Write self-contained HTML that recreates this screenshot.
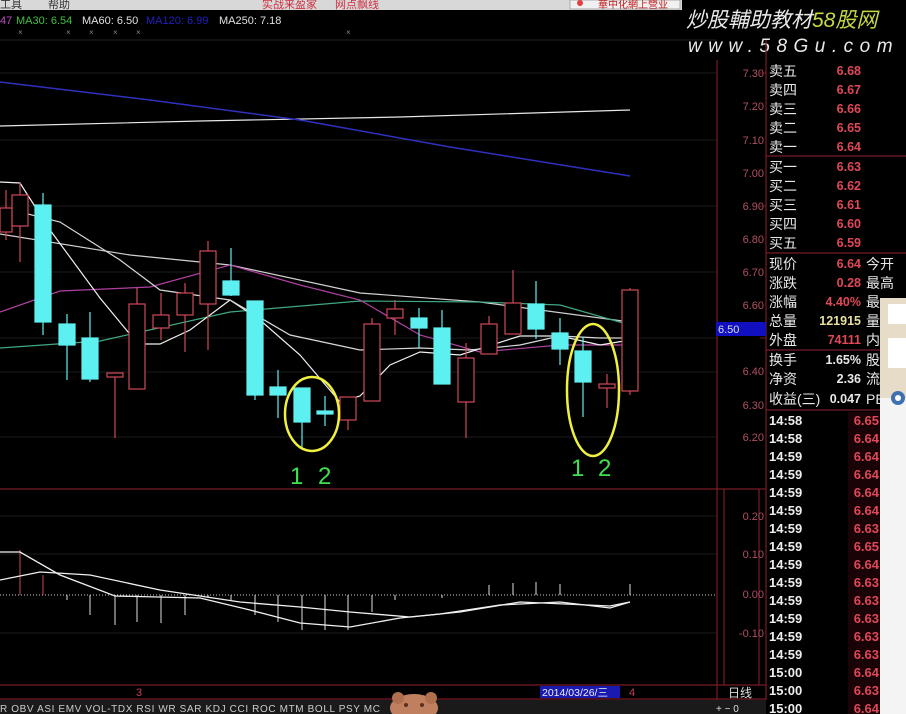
<!DOCTYPE html>
<html><head><meta charset="utf-8"><style>
html,body{margin:0;padding:0;background:#000;width:906px;height:714px;overflow:hidden}
svg{display:block}
text{font-family:"Liberation Sans","Noto Sans CJK SC",sans-serif}
.cn{font-family:"Liberation Sans","Noto Sans CJK SC",sans-serif}
</style></head><body>
<svg width="906" height="714" viewBox="0 0 906 714" xmlns="http://www.w3.org/2000/svg">
<rect width="906" height="714" fill="#000"/>
<rect x="0" y="0" width="682" height="10" fill="#d8d8d8"/>
<text x="0" y="8" font-size="11" fill="#333">工具</text>
<text x="48" y="8" font-size="11" fill="#333">帮助</text>
<text x="262" y="8" font-size="11" fill="#d03040">实战来盈家</text>
<text x="335" y="8" font-size="11" fill="#d03040">网点飘线</text>
<rect x="570" y="0" width="110" height="9" fill="#f0f0f0" stroke="#aaa"/>
<circle cx="580" cy="3" r="3" fill="#e04040"/>
<text x="598" y="8" font-size="10" fill="#c02020">華中化網上營业</text>
<text x="686" y="27" font-size="21" font-style="italic" fill="#e8e8e8">炒股輔助教材<tspan fill="#c8d840">58股网</tspan></text>
<text x="688" y="52" font-size="19" font-style="italic" fill="#e8e8e8" letter-spacing="6.5">www.58Gu.com</text>
<text x="0" y="24" font-size="11" fill="#c050c0">47</text>
<text x="16" y="24" font-size="11" fill="#40c040">MA30: 6.54</text>
<text x="82" y="24" font-size="11" fill="#e0e0e0">MA60: 6.50</text>
<text x="146" y="24" font-size="11" fill="#2020c0">MA120: 6.99</text>
<text x="219" y="24" font-size="11" fill="#e0e0e0">MA250: 7.18</text>
<g fill="#888" font-size="8"><text x="18" y="35">×</text><text x="66" y="35">×</text><text x="89" y="35">×</text><text x="113" y="35">×</text><text x="136" y="35">×</text><text x="346" y="35">×</text></g>
<g stroke="#1c1c1c" stroke-width="1">
<line x1="0" y1="73" x2="716" y2="73"/><line x1="0" y1="140" x2="716" y2="140"/><line x1="0" y1="206" x2="716" y2="206"/><line x1="0" y1="272" x2="716" y2="272"/><line x1="0" y1="338" x2="716" y2="338"/><line x1="0" y1="372" x2="716" y2="372"/><line x1="0" y1="437" x2="716" y2="437"/>
<line x1="0" y1="516" x2="716" y2="516"/><line x1="0" y1="554" x2="716" y2="554"/><line x1="0" y1="633" x2="716" y2="633"/>
</g>
<line x1="0" y1="40" x2="716" y2="40" stroke="#222"/>
<g stroke="#7a1a28" stroke-width="1.2">
<line x1="717" y1="60" x2="717" y2="700"/><line x1="766" y1="40" x2="766" y2="700"/>
<line x1="0" y1="489" x2="766" y2="489"/><line x1="0" y1="685" x2="766" y2="685"/>
<line x1="0" y1="699" x2="766" y2="699"/>
<line x1="724" y1="489" x2="724" y2="685"/><line x1="759" y1="489" x2="759" y2="685"/>
<line x1="766" y1="156" x2="906" y2="156"/><line x1="766" y1="253" x2="906" y2="253"/><line x1="766" y1="350" x2="906" y2="350"/><line x1="766" y1="410" x2="906" y2="410"/>
</g>
<g font-size="11" fill="#b05060" text-anchor="end">
<text x="764" y="77">7.30</text><text x="764" y="110">7.20</text><text x="764" y="144">7.10</text><text x="764" y="177">7.00</text><text x="764" y="210">6.90</text><text x="764" y="243">6.80</text><text x="764" y="276">6.70</text><text x="764" y="309">6.60</text><text x="764" y="375">6.40</text><text x="764" y="409">6.30</text><text x="764" y="441">6.20</text>
<text x="764" y="520">0.20</text><text x="764" y="558">0.10</text><text x="764" y="598">0.00</text><text x="764" y="637">-0.10</text>
</g>
<g stroke="#7a1a28"><line x1="760" y1="73" x2="766" y2="73"/><line x1="760" y1="206" x2="766" y2="206"/><line x1="760" y1="338" x2="766" y2="338"/></g>
<rect x="716" y="322" width="50" height="14" fill="#1010c0"/>
<text x="718" y="333" font-size="11" fill="#ddd">6.50</text>
<g fill="none" stroke-width="1.2">
<polyline stroke="#e8e8e8" points="0,126 200,121 400,117 630,110"/>
<polyline stroke="#3030c0" stroke-width="1.5" points="0,82 150,100 300,120 450,147 630,176"/>
<polyline stroke="#d0d0d0" points="0,234 130,255 230,265 360,293 480,302 630,322"/>
<polyline stroke="#40a880" points="0,348 100,341 230,312 360,301 480,302 560,305 630,325"/>
<polyline stroke="#b040a0" points="0,312 60,291 150,287 230,265 300,285 360,300 420,335 480,352 560,345 630,345"/>
<polyline stroke="#f0f0f0" points="0,182 20,183 50,230 100,298 138,344 160,344 190,330 230,300 260,320 300,355 340,402 360,396 390,365 420,352 460,355 520,336 560,336 600,345 630,340"/>
<polyline stroke="#d8d8d8" points="0,220 20,212 60,222 120,260 160,290 230,300 290,335 360,350 420,348 470,350 520,345 560,336 600,338 630,338"/>
</g>
<g stroke="#d04858" stroke-width="1.2" fill="#000">
<line x1="6" y1="190" x2="6" y2="240"/><rect x="0" y="208" width="12" height="24"/>
<line x1="20" y1="183" x2="20" y2="262"/><rect x="12" y="195" width="16" height="31"/>
<line x1="115" y1="375" x2="115" y2="438"/><rect x="107" y="373" width="16" height="4"/>
<line x1="137" y1="288" x2="137" y2="304"/><rect x="129" y="304" width="16" height="85"/>
<line x1="161" y1="293" x2="161" y2="340"/><rect x="153" y="315" width="16" height="13"/>
<line x1="185" y1="283" x2="185" y2="352"/><rect x="177" y="293" width="16" height="22"/>
<line x1="208" y1="241" x2="208" y2="350"/><rect x="200" y="251" width="16" height="53"/>
<line x1="348" y1="397" x2="348" y2="430"/><rect x="340" y="397" width="16" height="23"/>
<line x1="372" y1="318" x2="372" y2="324"/><rect x="364" y="324" width="16" height="77"/>
<line x1="395" y1="300" x2="395" y2="335"/><rect x="387" y="309" width="16" height="9"/>
<line x1="466" y1="343" x2="466" y2="438"/><rect x="458" y="358" width="16" height="44"/>
<line x1="489" y1="316" x2="489" y2="324"/><rect x="481" y="324" width="16" height="30"/>
<line x1="513" y1="270" x2="513" y2="303"/><rect x="505" y="303" width="16" height="31"/>
<line x1="607" y1="374" x2="607" y2="408"/><rect x="599" y="384" width="16" height="4"/>
<line x1="630" y1="288" x2="630" y2="395"/><rect x="622" y="290" width="16" height="101"/>
</g>
<g stroke="#60f0f0" stroke-width="1.2" fill="#5cf0f0">
<line x1="43" y1="193" x2="43" y2="335"/><rect x="35" y="205" width="16" height="117"/>
<line x1="67" y1="314" x2="67" y2="380"/><rect x="59" y="324" width="16" height="21"/>
<line x1="90" y1="312" x2="90" y2="382"/><rect x="82" y="338" width="16" height="41"/>
<line x1="231" y1="248" x2="231" y2="296"/><rect x="223" y="281" width="16" height="14"/>
<line x1="255" y1="301" x2="255" y2="400"/><rect x="247" y="301" width="16" height="94"/>
<line x1="278" y1="370" x2="278" y2="418"/><rect x="270" y="387" width="16" height="8"/>
<line x1="302" y1="388" x2="302" y2="448"/><rect x="294" y="388" width="16" height="34"/>
<line x1="325" y1="396" x2="325" y2="426"/><rect x="317" y="411" width="16" height="3"/>
<line x1="419" y1="308" x2="419" y2="348"/><rect x="411" y="318" width="16" height="10"/>
<line x1="442" y1="310" x2="442" y2="384"/><rect x="434" y="328" width="16" height="56"/>
<line x1="536" y1="281" x2="536" y2="339"/><rect x="528" y="304" width="16" height="25"/>
<line x1="560" y1="318" x2="560" y2="365"/><rect x="552" y="333" width="16" height="16"/>
<line x1="583" y1="337" x2="583" y2="417"/><rect x="575" y="351" width="16" height="31"/>
</g>
<g fill="none" stroke="#f0f040" stroke-width="2.5">
<ellipse cx="312" cy="414" rx="27" ry="37"/><ellipse cx="593" cy="390" rx="26" ry="66"/>
</g>
<g font-size="24" fill="#40e050">
<text x="290" y="484">1</text><text x="318" y="484">2</text><text x="571" y="476">1</text><text x="598" y="476">2</text>
</g>
<line x1="0" y1="595" x2="716" y2="595" stroke="#ccc" stroke-dasharray="1,2"/>
<g stroke="#e0e0e0" stroke-width="1">
<line x1="20" y1="550" x2="20" y2="595" stroke="#d04858"/><line x1="43" y1="575" x2="43" y2="595" stroke="#d04858"/>
<line x1="67" y1="595" x2="67" y2="600"/><line x1="90" y1="595" x2="90" y2="615"/><line x1="115" y1="595" x2="115" y2="625"/><line x1="137" y1="595" x2="137" y2="622"/><line x1="161" y1="595" x2="161" y2="623"/><line x1="185" y1="595" x2="185" y2="615"/><line x1="208" y1="595" x2="208" y2="598"/><line x1="231" y1="595" x2="231" y2="600"/><line x1="255" y1="595" x2="255" y2="615"/><line x1="278" y1="595" x2="278" y2="622"/><line x1="302" y1="595" x2="302" y2="630"/><line x1="325" y1="595" x2="325" y2="630"/><line x1="348" y1="595" x2="348" y2="630"/><line x1="372" y1="595" x2="372" y2="612"/><line x1="395" y1="595" x2="395" y2="600"/><line x1="442" y1="595" x2="442" y2="598"/>
<line x1="489" y1="585" x2="489" y2="595"/><line x1="513" y1="583" x2="513" y2="595"/><line x1="536" y1="582" x2="536" y2="595"/><line x1="560" y1="584" x2="560" y2="595"/><line x1="630" y1="584" x2="630" y2="595"/>
</g>
<g fill="none" stroke="#f0f0f0" stroke-width="1.3">
<polyline points="0,552 20,552 60,575 115,596 200,598 250,610 300,623 350,627 400,618 440,614 500,605 560,602 610,608 630,602"/>
<polyline points="0,580 40,572 90,575 160,590 240,602 300,607 350,612 410,617 460,612 520,602 610,606 630,602"/>
</g>
<text x="136" y="696" font-size="11" fill="#c04050">3</text>
<rect x="540" y="686" width="80" height="12" fill="#1a1ab0"/>
<text x="542" y="696" font-size="10.5" fill="#eee">2014/03/26/三</text>
<text x="629" y="696" font-size="11" fill="#c04050">4</text>
<text x="728" y="697" font-size="12" fill="#ddd">日线</text>
<rect x="0" y="700" width="766" height="14" fill="#1a1a1a"/>
<text x="0" y="712" font-size="10" fill="#ccc" font-family="Liberation Serif,serif" textLength="380" lengthAdjust="spacing">R OBV ASI EMV VOL-TDX RSI WR SAR KDJ CCI ROC MTM BOLL PSY MC</text>
<ellipse cx="414" cy="708" rx="24" ry="14" fill="#c08060"/>
<circle cx="398" cy="698" r="6" fill="#b07050"/><circle cx="431" cy="698" r="6" fill="#b07050"/>
<circle cx="406" cy="705" r="2" fill="#5a3020"/><circle cx="422" cy="705" r="2" fill="#5a3020"/>
<text x="716" y="712" font-size="10" fill="#ddd">+  −  0</text>
<g class="cn" font-size="14" fill="#e8e8e8">
<text x="769" y="76">卖五</text><text x="769" y="95">卖四</text><text x="769" y="114">卖三</text><text x="769" y="133">卖二</text><text x="769" y="152">卖一</text>
<text x="769" y="172">买一</text><text x="769" y="191">买二</text><text x="769" y="210">买三</text><text x="769" y="229">买四</text><text x="769" y="248">买五</text>
<text x="769" y="269">现价</text><text x="769" y="288">涨跌</text><text x="769" y="307">涨幅</text><text x="769" y="326">总量</text><text x="769" y="345">外盘</text>
<text x="769" y="365">换手</text><text x="769" y="384">净资</text><text x="769" y="404">收益(三)</text>
<text x="866" y="269">今开</text><text x="866" y="288">最高</text><text x="866" y="307">最</text><text x="866" y="326">量</text><text x="866" y="345">内</text><text x="866" y="365">股</text><text x="866" y="384">流</text><text x="866" y="404">PE</text>
</g>
<g font-size="12.5" font-weight="bold" fill="#e04858" text-anchor="end">
<text x="861" y="75">6.68</text><text x="861" y="94">6.67</text><text x="861" y="113">6.66</text><text x="861" y="132">6.65</text><text x="861" y="151">6.64</text>
<text x="861" y="171">6.63</text><text x="861" y="190">6.62</text><text x="861" y="209">6.61</text><text x="861" y="228">6.60</text><text x="861" y="247">6.59</text>
<text x="861" y="268">6.64</text><text x="861" y="287">0.28</text><text x="861" y="306">4.40%</text>
<text x="861" y="325" fill="#e8e0a0">121915</text><text x="861" y="344">74111</text>
<text x="861" y="364" fill="#e8e8e8">1.65%</text><text x="861" y="383" fill="#e8e8e8">2.36</text><text x="861" y="403" fill="#e8e8e8">0.047</text>
</g>
<rect x="848" y="412" width="32" height="302" fill="#1a0306"/>
<g font-size="13" font-weight="bold" fill="#eee">
<text x="769" y="425">14:58</text><text x="769" y="443">14:58</text><text x="769" y="461">14:59</text><text x="769" y="479">14:59</text><text x="769" y="497">14:59</text><text x="769" y="515">14:59</text><text x="769" y="533">14:59</text><text x="769" y="551">14:59</text><text x="769" y="569">14:59</text><text x="769" y="587">14:59</text><text x="769" y="605">14:59</text><text x="769" y="623">14:59</text><text x="769" y="641">14:59</text><text x="769" y="659">14:59</text><text x="769" y="677">15:00</text><text x="769" y="695">15:00</text><text x="769" y="713">15:00</text>
</g>
<g font-size="13" font-weight="bold" fill="#e04858" text-anchor="end">
<text x="879" y="425">6.65</text><text x="879" y="443">6.64</text><text x="879" y="461">6.64</text><text x="879" y="479">6.64</text><text x="879" y="497">6.64</text><text x="879" y="515">6.64</text><text x="879" y="533">6.63</text><text x="879" y="551">6.65</text><text x="879" y="569">6.64</text><text x="879" y="587">6.63</text><text x="879" y="605">6.63</text><text x="879" y="623">6.63</text><text x="879" y="641">6.63</text><text x="879" y="659">6.63</text><text x="879" y="677">6.64</text><text x="879" y="695">6.63</text><text x="879" y="713">6.64</text>
</g>
<rect x="880" y="298" width="26" height="416" fill="#f4f4f4"/>
<rect x="880" y="298" width="26" height="100" fill="#e6dcc8"/>
<rect x="888" y="304" width="18" height="20" fill="#fff"/>
<rect x="888" y="338" width="18" height="30" fill="#fff"/>
<circle cx="898" cy="398" r="7" fill="#4070b0"/>
<circle cx="898" cy="398" r="3" fill="#fff"/>
</svg>
</body></html>
